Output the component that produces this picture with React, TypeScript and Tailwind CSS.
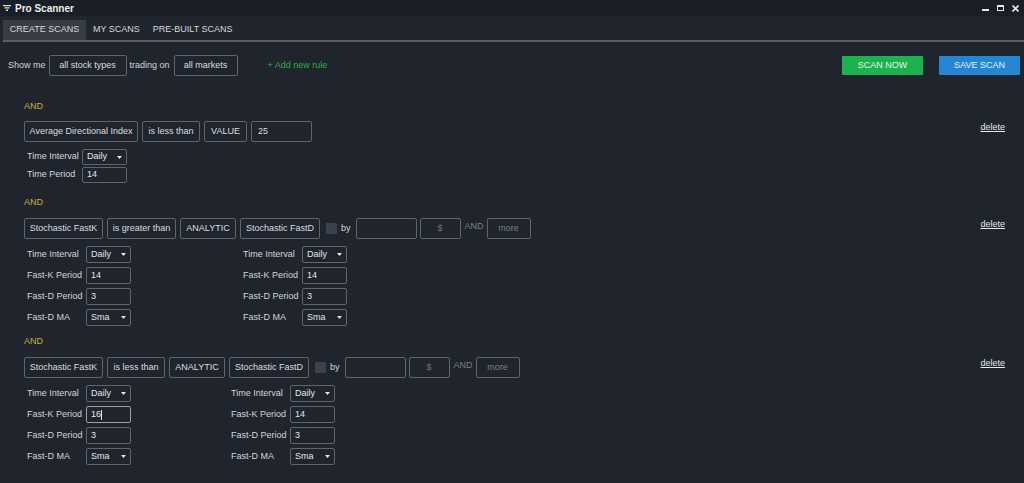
import React from 'react';

interface Param {
  label: string;
  value: string;
  select?: boolean;
  focused?: boolean;
}

const font = { fontFamily: '"Liberation Sans", Arial, sans-serif' };

// Boxed token in the rule row (indicator / comparator / type)
const Token = ({
  children,
  className = '',
  color = 'text-[#dcdee2]',
}: {
  children?: React.ReactNode;
  className?: string;
  color?: string;
}) => (
  <div
    className={`h-[21px] flex items-center justify-center border border-[#5f656e] rounded-[2px] text-[9px] whitespace-nowrap ${color} ${className}`}
  >
    {children}
  </div>
);

const Caret = () => (
  <svg width="5" height="3" viewBox="0 0 5 3" className="ml-auto">
    <path d="M0 0 L5 0 L2.5 3 Z" fill="#e6e6e6" />
  </svg>
);

const Field = ({ p, height }: { p: Param; height: string }) => (
  <div
    className={`w-[45px] ${height} px-[4px] flex items-center rounded-[2px] text-[9px] text-[#e4e6ea] border ${
      p.focused ? 'border-[#9aa0a8]' : 'border-[#5f656e]'
    }`}
  >
    <span>{p.value}</span>
    {p.focused && <span className="w-px h-[10px] bg-[#e4e6ea]" />}
    {p.select && <Caret />}
  </div>
);

const ParamColumn = ({
  params,
  labelW,
  rowH,
  gap,
}: {
  params: Param[];
  labelW: string;
  rowH: string;
  gap: string;
}) => (
  <div className={`flex flex-col ${gap}`}>
    {params.map((p) => (
      <div key={p.label} className="flex items-center">
        <div className={`${labelW} pl-[3px] text-[9px] text-[#d4d6da] whitespace-nowrap`}>{p.label}</div>
        <Field p={p} height={rowH} />
      </div>
    ))}
  </div>
);

const AndLabel = () => <div className="h-[12px] leading-[12px] text-[9px] text-[#c8b040]">AND</div>;

const Delete = () => (
  <div className="ml-auto pr-[19px] text-[9px] text-[#e8e8e8] underline -mt-[8px]">delete</div>
);

const stochParams: Param[] = [
  { label: 'Time Interval', value: 'Daily', select: true },
  { label: 'Fast-K Period', value: '14' },
  { label: 'Fast-D Period', value: '3' },
  { label: 'Fast-D MA', value: 'Sma', select: true },
];

const StochRule = ({
  comparator,
  compW,
  leftW,
  top,
  focusK,
}: {
  comparator: string;
  compW: string;
  leftW: string;
  top: string;
  focusK?: boolean;
}) => {
  const leftParams = stochParams.map((p) =>
    focusK && p.label === 'Fast-K Period' ? { ...p, value: '16', focused: true } : p
  );
  return (
    <div className={top}>
      <AndLabel />
      <div className="mt-[10px] flex items-center">
        <div className="flex items-center gap-[4px]">
          <Token className="w-[79px]">Stochastic FastK</Token>
          <Token className={compW}>{comparator}</Token>
          <Token className="w-[56px]">ANALYTIC</Token>
          <Token className="w-[80px]">Stochastic FastD</Token>
        </div>
        <div className="ml-[6px] w-[11px] h-[11px] bg-[#3c424b] rounded-[1px]" />
        <div className="ml-[4px] text-[9px] text-[#d4d6da]">by</div>
        <Token className="ml-[5px] w-[61px]" />
        <Token className="ml-[3px] w-[41px]" color="text-[#6c717a]">$</Token>
        <div className="ml-[4px] text-[9px] text-[#7b8088] -mt-[4px]">AND</div>
        <Token className="ml-[3px] w-[44px]" color="text-[#7b8088]">more</Token>
        <Delete />
      </div>
      <div className="mt-[7px] flex">
        <div className={leftW}>
          <ParamColumn params={leftParams} labelW="w-[62px]" rowH="h-[17px]" gap="gap-[4px]" />
        </div>
        <ParamColumn params={stochParams} labelW="w-[62px]" rowH="h-[17px]" gap="gap-[4px]" />
      </div>
    </div>
  );
};

export default function App() {
  return (
    <div className="w-[1024px] h-[483px] bg-[#1f242d] overflow-hidden select-none" style={font}>
      {/* Title bar */}
      <div className="h-[16px] bg-[#1a1e25] flex items-center pl-[3px] pr-[5px]">
        <svg width="8" height="6" viewBox="0 0 8 6">
          <path d="M0 0 H8 V1.3 H0 Z M1.5 2.3 H6.5 V3.6 H1.5 Z M3 4.6 H5 V6 H3 Z" fill="#d8dade" />
        </svg>
        <span className="ml-[4px] text-[10px] font-bold text-[#eceef0]">Pro Scanner</span>
        <div className="ml-auto flex items-center gap-[8px]">
          <div className="w-[7px] h-[6px] border-b-2 border-[#e6e6e6]" />
          <div className="w-[7px] h-[6px] border border-t-2 border-[#e6e6e6]" />
          <svg width="7" height="7" viewBox="0 0 7 7">
            <path d="M0.5 0.5 L6.5 6.5 M6.5 0.5 L0.5 6.5" stroke="#e6e6e6" strokeWidth="1.6" />
          </svg>
        </div>
      </div>

      {/* Tabs */}
      <div className="bg-[#20252e] pl-[3px] pt-[4px]">
        <div className="flex items-end h-[20px] text-[9px] text-[#d6d8dc]">
          <div className="h-full w-[83px] bg-[#383d45] flex items-center justify-center">CREATE SCANS</div>
          <div className="h-full px-[7px] flex items-center">MY SCANS</div>
          <div className="h-full px-[6px] flex items-center">PRE-BUILT SCANS</div>
        </div>
        <div className="h-[2px] bg-[#5a5f67]" />
      </div>

      {/* Filter row */}
      <div className="mt-[13px] flex items-center pl-[8px] pr-[4px] text-[9px] text-[#d4d6da]">
        <span>Show me</span>
        <Token className="ml-[3px] h-[19px] w-[78px]">all stock types</Token>
        <span className="ml-[3px]">trading on</span>
        <Token className="ml-[4px] h-[19px] w-[64px]">all markets</Token>
        <span className="ml-[30px] text-[#2fae4c]">+ Add new rule</span>
        <button className="ml-auto w-[81px] h-[19px] bg-[#1cb24e] text-[9px] text-[#e8f4ec] rounded-[1px]">
          SCAN NOW
        </button>
        <button className="ml-[16px] w-[81px] h-[19px] bg-[#2587d4] text-[9px] text-[#e8f0f8] rounded-[1px]">
          SAVE SCAN
        </button>
      </div>

      {/* Rules */}
      <div className="pl-[24px] mt-[24px]">
        <div>
          <AndLabel />
          <div className="mt-[9px] flex items-center">
            <div className="flex items-center gap-[4px]">
              <Token className="w-[114px]">Average Directional Index</Token>
              <Token className="w-[58px]">is less than</Token>
              <Token className="w-[43px]">VALUE</Token>
              <Token className="w-[61px] justify-start px-[6px]">25</Token>
            </div>
            <Delete />
          </div>
          <div className="mt-[7px]">
            <ParamColumn
              params={[
                { label: 'Time Interval', value: 'Daily', select: true },
                { label: 'Time Period', value: '14' },
              ]}
              labelW="w-[58px]"
              rowH="h-[16px]"
              gap="gap-[2px]"
            />
          </div>
        </div>

        <StochRule comparator="is greater than" compW="w-[69px]" leftW="w-[216px]" top="mt-[13px]" />
        <StochRule comparator="is less than" compW="w-[58px]" leftW="w-[204px]" top="mt-[9px]" focusK />
      </div>
    </div>
  );
}
